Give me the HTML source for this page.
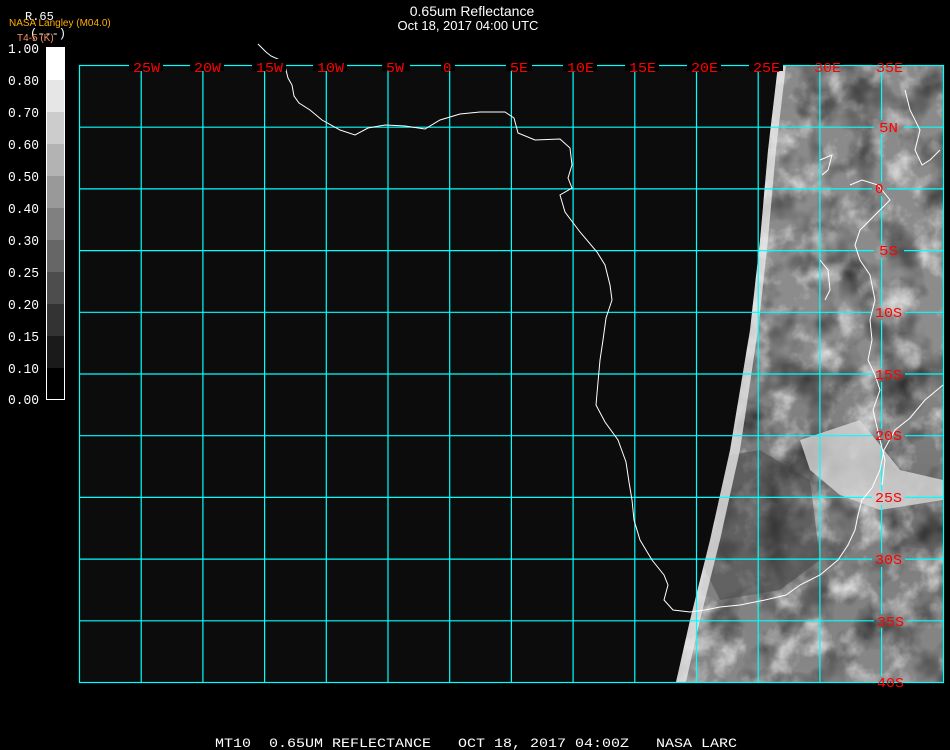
<!DOCTYPE html>
<html><head><meta charset="utf-8"><style>
html,body{margin:0;padding:0;background:#000;width:950px;height:750px;overflow:hidden}
svg{display:block}
</style></head><body>
<svg width="950" height="750" viewBox="0 0 950 750" xmlns="http://www.w3.org/2000/svg">
<defs>
<filter id="n" x="0" y="0" width="100%" height="100%">
<feTurbulence type="fractalNoise" baseFrequency="0.035" numOctaves="4" seed="4"/>
<feColorMatrix type="matrix" values="0 0 0 0 1  0 0 0 0 1  0 0 0 0 1  2.2 0 0 0 -1.05"/>
</filter>
<filter id="n2" x="0" y="0" width="100%" height="100%">
<feTurbulence type="fractalNoise" baseFrequency="0.025" numOctaves="3" seed="9"/>
<feColorMatrix type="matrix" values="0 0 0 0 0  0 0 0 0 0  0 0 0 0 0  2 0 0 0 -0.9"/>
</filter>
<clipPath id="sat"><polygon points="778,65 943,65 943,682 676,682 690,620 710,540 730,450 750,330 760,240 768,150"/></clipPath>
<linearGradient id="g" x1="0" y1="0" x2="0" y2="1">
<stop offset="0" stop-color="#8a8a8a"/><stop offset="0.45" stop-color="#8c8c8c"/><stop offset="0.65" stop-color="#777"/><stop offset="1" stop-color="#888"/>
</linearGradient>
</defs>
<rect x="79" y="65" width="864" height="617" fill="#0c0c0c"/>
<g clip-path="url(#sat)">
<rect x="660" y="65" width="290" height="620" fill="url(#g)"/>
<rect x="660" y="65" width="290" height="620" filter="url(#n)" opacity="0.85"/>
<rect x="660" y="65" width="290" height="620" filter="url(#n2)" opacity="0.75"/>
<polygon points="800,440 860,420 900,470 943,480 943,500 880,510 840,495 810,470" fill="#d8d8d8" opacity="0.8"/>
<polygon points="700,460 760,450 810,480 820,560 780,590 720,600 700,560" fill="#444" opacity="0.5"/>
<polygon points="676,682 690,620 710,540 730,450 750,330 760,240 768,150 778,65 786,65 776,150 768,240 758,330 740,450 720,540 700,620 686,682" fill="#eee" opacity="0.75"/>
</g>
<g stroke="#00ffff" stroke-width="1.2" fill="none">
<rect x="79.5" y="65.5" width="864" height="617"/>
<path d="M141.2 65V682M202.9 65V682M264.6 65V682M326.3 65V682M388 65V682M449.7 65V682M511.4 65V682M573.1 65V682M634.8 65V682M696.5 65V682M758.2 65V682M819.9 65V682M881.6 65V120M881.6 134V182M881.6 196V244M881.6 258V306M881.6 320V368M881.6 382V429M881.6 443V491M881.6 505V553M881.6 567V614M881.6 628V676"/>
<path d="M79 127.2H874M904 127.2H943M79 188.9H872M887 188.9H943M79 250.6H874M904 250.6H943M79 312.3H872M905 312.3H943M79 374H872M905 374H943M79 435.7H872M905 435.7H943M79 497.4H872M905 497.4H943M79 559.1H872M905 559.1H943M79 620.8H874M907 620.8H943"/>
</g>
<g fill="none" stroke="#fff" stroke-width="1">
<polyline points="258,44 262,48 266,52 271,56 280,60 285,66 288,78 292,85 294,96 299,103 310,110 322,120 340,130 355,135 368,128 385,125 405,126 425,129 440,120 460,114 480,112 505,112 514,118 518,133 535,140 560,139 570,148 572,165 568,178 572,188 560,195 565,212 580,232 597,252 605,265 610,285 612,300 606,318 603,340 600,360 598,382 596,405 605,422 618,440 626,462 629,482 632,500 634,520 640,540 652,560 664,575 668,585 664,600 673,610 690,612 705,610 720,607 740,605 765,600 786,595 800,585 820,575 838,560 848,545 855,530 858,515 862,500 872,488 880,470 884,450 895,430 910,418 925,400 943,385"/>
<polyline points="905,90 910,110 920,130 915,150 922,165 930,160 940,150"/>
<polyline points="850,185 862,180 878,185 890,200 875,215 860,230 855,245 860,260 870,275 875,300 870,320 872,340 868,360 875,375 880,390 873,410 880,440 885,460 882,485"/>
<polyline points="820,160 832,155 828,170 822,175"/>
<polyline points="820,260 828,270 830,290 825,300"/>
</g>
<g font-family="Liberation Mono, monospace" font-size="14" fill="#ff0000">
<g fill="#000"><rect x="129" y="59" width="34" height="12"/><rect x="190" y="59" width="34" height="12"/><rect x="252" y="59" width="34" height="12"/><rect x="313" y="59" width="34" height="12"/><rect x="382" y="59" width="28" height="12"/><rect x="441" y="59" width="14" height="12"/><rect x="506" y="59" width="26" height="12"/><rect x="563" y="59" width="34" height="12"/><rect x="625" y="59" width="34" height="12"/><rect x="687" y="59" width="34" height="12"/><rect x="749" y="59" width="34" height="12"/><rect x="810" y="59" width="34" height="6"/><rect x="872" y="59" width="34" height="6"/></g>
<text x="133" y="72" textLength="27" lengthAdjust="spacingAndGlyphs">25W</text><text x="194" y="72" textLength="27" lengthAdjust="spacingAndGlyphs">20W</text><text x="256" y="72" textLength="27" lengthAdjust="spacingAndGlyphs">15W</text><text x="317" y="72" textLength="27" lengthAdjust="spacingAndGlyphs">10W</text><text x="386" y="72" textLength="18" lengthAdjust="spacingAndGlyphs">5W</text><text x="443" y="72">0</text><text x="510" y="72" textLength="18" lengthAdjust="spacingAndGlyphs">5E</text><text x="567" y="72" textLength="27" lengthAdjust="spacingAndGlyphs">10E</text><text x="629" y="72" textLength="27" lengthAdjust="spacingAndGlyphs">15E</text><text x="691" y="72" textLength="27" lengthAdjust="spacingAndGlyphs">20E</text><text x="753" y="72" textLength="27" lengthAdjust="spacingAndGlyphs">25E</text><text x="814" y="72" textLength="27" lengthAdjust="spacingAndGlyphs">30E</text><text x="876" y="72" textLength="27" lengthAdjust="spacingAndGlyphs">35E</text>
<text x="879" y="132" textLength="19" lengthAdjust="spacingAndGlyphs">5N</text><text x="875" y="193">0</text><text x="879" y="255" textLength="19" lengthAdjust="spacingAndGlyphs">5S</text><text x="875" y="317" textLength="27" lengthAdjust="spacingAndGlyphs">10S</text><text x="875" y="379" textLength="27" lengthAdjust="spacingAndGlyphs">15S</text><text x="875" y="440" textLength="27" lengthAdjust="spacingAndGlyphs">20S</text><text x="875" y="502" textLength="27" lengthAdjust="spacingAndGlyphs">25S</text><text x="875" y="564" textLength="27" lengthAdjust="spacingAndGlyphs">30S</text><text x="877" y="626" textLength="27" lengthAdjust="spacingAndGlyphs">35S</text><text x="877" y="687" textLength="27" lengthAdjust="spacingAndGlyphs">40S</text>
</g>
<g font-family="Liberation Sans, sans-serif" fill="#fff" text-anchor="middle">
<text x="472" y="16" font-size="14">0.65um Reflectance</text>
<text x="468" y="30" font-size="13">Oct 18, 2017 04:00 UTC</text>
</g>
<text x="25" y="20" font-family="Liberation Mono, monospace" font-size="12" fill="#fff">R.65</text>
<text x="30" y="37" font-family="Liberation Mono, monospace" font-size="12" fill="#fff">(---)</text>
<text x="9" y="26" font-family="Liberation Sans, sans-serif" font-size="10" fill="#ffb000">NASA Langley (M04.0)</text>
<text x="17" y="41" font-family="Liberation Sans, sans-serif" font-size="10" fill="#ff9060">T4-5 (K)</text>
<g>
<rect x="47" y="48" width="18" height="32" fill="#fff"/>
<rect x="47" y="80" width="18" height="32" fill="#e6e6e6"/>
<rect x="47" y="112" width="18" height="32" fill="#cccccc"/>
<rect x="47" y="144" width="18" height="32" fill="#b3b3b3"/>
<rect x="47" y="176" width="18" height="32" fill="#999"/>
<rect x="47" y="208" width="18" height="32" fill="#808080"/>
<rect x="47" y="240" width="18" height="32" fill="#666"/>
<rect x="47" y="272" width="18" height="32" fill="#4d4d4d"/>
<rect x="47" y="304" width="18" height="32" fill="#333"/>
<rect x="47" y="336" width="18" height="32" fill="#1a1a1a"/>
<rect x="47" y="368" width="18" height="31" fill="#000"/>
</g>
<rect x="46.5" y="47.5" width="18" height="352" fill="none" stroke="#fff"/>
<g font-family="Liberation Mono, monospace" font-size="14" fill="#fff">
<text x="8" y="53" textLength="31" lengthAdjust="spacingAndGlyphs">1.00</text><text x="8" y="85" textLength="31" lengthAdjust="spacingAndGlyphs">0.80</text><text x="8" y="117" textLength="31" lengthAdjust="spacingAndGlyphs">0.70</text><text x="8" y="149" textLength="31" lengthAdjust="spacingAndGlyphs">0.60</text><text x="8" y="181" textLength="31" lengthAdjust="spacingAndGlyphs">0.50</text><text x="8" y="213" textLength="31" lengthAdjust="spacingAndGlyphs">0.40</text><text x="8" y="245" textLength="31" lengthAdjust="spacingAndGlyphs">0.30</text><text x="8" y="277" textLength="31" lengthAdjust="spacingAndGlyphs">0.25</text><text x="8" y="309" textLength="31" lengthAdjust="spacingAndGlyphs">0.20</text><text x="8" y="341" textLength="31" lengthAdjust="spacingAndGlyphs">0.15</text><text x="8" y="373" textLength="31" lengthAdjust="spacingAndGlyphs">0.10</text><text x="8" y="404" textLength="31" lengthAdjust="spacingAndGlyphs">0.00</text>
</g>
<text x="215" y="747" font-family="Liberation Mono, monospace" font-size="13" fill="#fff" xml:space="preserve" textLength="522" lengthAdjust="spacingAndGlyphs">MT10  0.65UM REFLECTANCE   OCT 18, 2017 04:00Z   NASA LARC</text>
</svg>
</body></html>
